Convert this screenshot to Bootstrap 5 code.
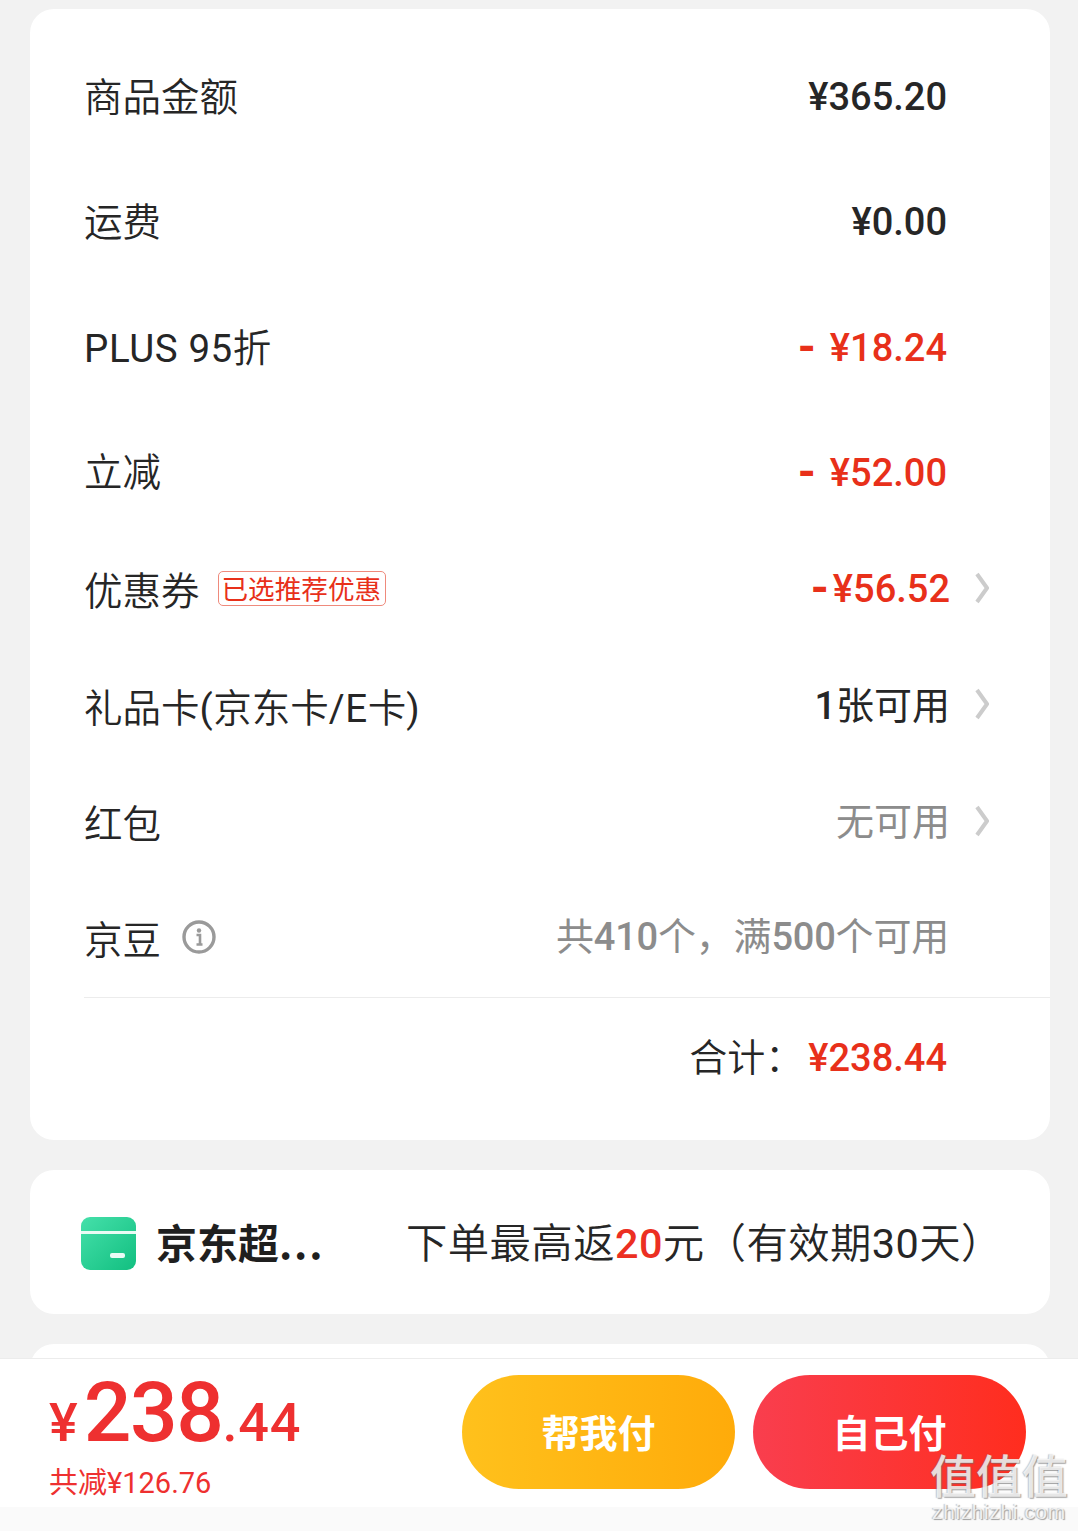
<!DOCTYPE html>
<html lang="zh-CN">
<head>
  <meta charset="UTF-8">
  <meta name="viewport" content="width=device-width, initial-scale=1.0">
  <title>订单结算</title>
  <link href="https://cdn.jsdelivr.net/npm/bootstrap@5.3.0/dist/css/bootstrap.min.css" rel="stylesheet">
  <style>
    body { background: #f2f2f2; font-family: Roboto, "Noto Sans CJK SC", sans-serif; color: #262626; width: 1078px; height: 1531px; overflow: hidden; }
    .page-wrap { height: 1531px; }
    .scroll-area { height: 1358px; padding: 9px 28px 0 30px; overflow: hidden; }
    .panel { background: #fff; border-radius: 24px; }
    .fee-panel { height: 1131px; padding: 63px 0 0 54px; margin-bottom: 30px; }
    .fee-list { gap: 75px; }
    .fee-row { height: 50px; }
    .fee-row .row-name { margin-bottom: 6px; }
    .fee-row .row-plus { margin-bottom: 0; }
    .opt-list { margin-top: 33px; }
    .opt-row { height: 116.33px; }
    .row-name { font-size: 38.5px; font-family: "Noto Sans CJK SC", sans-serif; font-weight: 350; line-height: 50px; white-space: nowrap; }
    .row-name .latin { font-family: Roboto, sans-serif; font-weight: 400; letter-spacing: .6px; }
    .row-gift { margin-top: 5px; }
    .row-val { font-size: 38px; font-weight: 500; text-align: right; line-height: 50px; white-space: nowrap; }
    .fee-row .row-val { margin-right: 103px; }
    .row-val .cjk { font-family: "Noto Sans CJK SC", sans-serif; font-weight: 400; }
    .val-red { color: #e8301a; }
    .val-grey { color: #8c8c8c; }
    .dash { font-size: 46px; line-height: 1; font-weight: 700; position: relative; top: 2px; }
    .dash-gap { margin-right: 14px; }
    .dash-tight { margin-right: 4px; }
    .opt-right { margin-left: auto; margin-right: 61px; gap: 25px; }
    .opt-tail { margin-left: auto; margin-right: 101px; letter-spacing: -.2px; position: relative; top: -2px; }
    .promo-tag { height: 35px; margin-left: 18px; padding: 0 4px 0 3px; border: 1px solid #ef8a7c; border-radius: 5px; color: #e8301a; font-size: 26.6px; font-family: "Noto Sans CJK SC", sans-serif; line-height: 31px; }
    .info-ic { margin-left: 21px; }
    .divider-line { height: 1px; background: #ececec; margin-top: 2px; }
    .total-row { height: 120px; margin-right: 103px; font-size: 38px; }
    .total-label { margin: 0 5px 6px 0; font-size: 38px; }
    .gain-panel { height: 144px; padding: 0 0 0 50px; margin-bottom: 30px; }
    .gain-name { width: 250px; font-size: 41px; font-weight: 700; font-family: "Noto Sans CJK SC", sans-serif; color: #1f1f1f; }
    .gain-name span { letter-spacing: 1.8px; }
    .gain-desc { font-size: 41.4px; font-family: "Noto Sans CJK SC", sans-serif; font-weight: 350; white-space: nowrap; letter-spacing: .4px; }
    .gain-desc b { color: #ec2f22; font-family: Roboto, sans-serif; font-weight: 500; }
    .gain-desc .latin { font-family: Roboto, sans-serif; font-weight: 400; }
    .wallet-ic { margin: 4px 20px 0 0; }
    .stub-panel { height: 60px; border-radius: 24px 24px 0 0; }
    .pay-bar { height: 149px; background: #fff; border-top: 1px solid #ececec; padding: 12px 52px 0 49px; }
    .price-main { color: #ee3030; font-weight: 500; line-height: 1; white-space: nowrap; height: 78px; }
    .cur { font-size: 54px; margin-right: 6px; }
    .big { font-size: 84px; letter-spacing: -1.5px; }
    .cents { font-size: 54px; letter-spacing: .8px; }
    .saved { color: #ee3030; font-size: 29px; line-height: 34px; margin-top: 14px; white-space: nowrap; }
    .saved span { font-family: "Noto Sans CJK SC", sans-serif; }
    .pay-btns { gap: 18px; margin-top: 4px; }
    .btn.pay-btn { width: 273px; height: 114px; border: 0; border-radius: 57px; color: #fff; font-size: 38px; font-weight: 700; font-family: "Noto Sans CJK SC", sans-serif; padding: 0 0 4px; }
    .btn-help { background: linear-gradient(90deg, #ffc11c, #ffab0a); }
    .btn-self { background: linear-gradient(90deg, #f93e4e, #ff2d1e); }
    .foot-strip { height: 24px; background: #fafafa; }
    .wm { position: absolute; right: 8px; bottom: 7px; width: 142px; text-align: center; color: rgba(255,255,255,.78); text-shadow: 1px 1px 1px rgba(110,110,110,.65), -1px 0 1px rgba(110,110,110,.4); pointer-events: none; font-family: "Noto Sans CJK SC", sans-serif; }
    .wm-cn { font-size: 46px; line-height: 50px; margin-bottom: 2px; font-weight: 500; white-space: nowrap; }
    .wm-en { font-family: "Liberation Sans", sans-serif; font-size: 21px; line-height: 24px; letter-spacing: .6px; }
  </style>
</head>
<body>

<div class="page-wrap position-relative d-flex flex-column">
  <div class="scroll-area">

    <!-- Fee summary -->
    <div class="panel fee-panel">
      <div class="fee-list d-flex flex-column">
        <div class="fee-row d-flex align-items-center justify-content-between">
          <div class="row-name">商品金额</div>
          <div class="row-val">¥365.20</div>
        </div>
        <div class="fee-row d-flex align-items-center justify-content-between">
          <div class="row-name">运费</div>
          <div class="row-val">¥0.00</div>
        </div>
        <div class="fee-row d-flex align-items-center justify-content-between">
          <div class="row-name row-plus"><span class="latin">PLUS 95</span>折</div>
          <div class="row-val val-red"><span class="dash dash-gap">-</span>¥18.24</div>
        </div>
        <div class="fee-row d-flex align-items-center justify-content-between">
          <div class="row-name">立减</div>
          <div class="row-val val-red"><span class="dash dash-gap">-</span>¥52.00</div>
        </div>
      </div>

      <div class="opt-list">
        <div class="opt-row d-flex align-items-center">
          <div class="row-name">优惠券</div>
          <div class="promo-tag">已选推荐优惠</div>
          <div class="opt-right d-flex align-items-center">
            <div class="row-val val-red"><span class="dash dash-tight">-</span>¥56.52</div>
            <svg width="14" height="32" viewBox="0 0 14 32"><path d="M2 2 L12 16 L2 30" fill="none" stroke="#cccccc" stroke-width="4"/></svg>
          </div>
        </div>
        <div class="opt-row d-flex align-items-center">
          <div class="row-name row-gift"><span>礼品卡</span><span class="latin">(</span>京东卡<span class="latin">/E</span>卡<span class="latin">)</span></div>
          <div class="opt-right d-flex align-items-center">
            <div class="row-val">1<span class="cjk">张可用</span></div>
            <svg width="14" height="32" viewBox="0 0 14 32"><path d="M2 2 L12 16 L2 30" fill="none" stroke="#cccccc" stroke-width="4"/></svg>
          </div>
        </div>
        <div class="opt-row d-flex align-items-center">
          <div class="row-name">红包</div>
          <div class="opt-right d-flex align-items-center">
            <div class="row-val val-grey"><span class="cjk">无可用</span></div>
            <svg width="14" height="32" viewBox="0 0 14 32"><path d="M2 2 L12 16 L2 30" fill="none" stroke="#cccccc" stroke-width="4"/></svg>
          </div>
        </div>
        <div class="opt-row d-flex align-items-center">
          <div class="row-name">京豆</div>
          <svg class="info-ic" width="34" height="34" viewBox="0 0 34 34">
            <circle cx="17" cy="17" r="15" fill="none" stroke="#9a9a9a" stroke-width="3.4"/>
            <circle cx="17" cy="10.5" r="2.2" fill="#9a9a9a"/>
            <path d="M14.5 15 H18 V24 M14.5 24.5 H20.5" fill="none" stroke="#9a9a9a" stroke-width="2.6"/>
          </svg>
          <div class="row-val val-grey opt-tail"><span class="cjk">共</span>410<span class="cjk">个，满</span>500<span class="cjk">个可用</span></div>
        </div>
      </div>

      <div class="divider-line"></div>
      <div class="total-row d-flex align-items-center justify-content-end">
        <span class="row-name total-label">合计：</span>
        <span class="val-red fw-medium">¥238.44</span>
      </div>
    </div>

    <!-- JD card row -->
    <div class="panel gain-panel d-flex align-items-center">
      <svg class="wallet-ic" width="56" height="54" viewBox="0 0 56 54">
        <defs>
          <linearGradient id="walletFill" x1="0" y1="0" x2="1" y2="1">
            <stop offset="0" stop-color="#45e0aa"/>
            <stop offset="1" stop-color="#12bf80"/>
          </linearGradient>
        </defs>
        <rect x="1" y="0" width="55" height="53" rx="9" fill="url(#walletFill)"/>
        <rect x="1" y="14" width="55" height="3" fill="#e9fbf4"/>
        <rect x="30" y="36" width="15" height="5" rx="2" fill="#eafbf5"/>
      </svg>
      <div class="gain-name">京东超<span>...</span></div>
      <div class="gain-desc">下单最高返<b>20</b>元（有效期<span class="latin">30</span>天）</div>
    </div>

    <div class="panel stub-panel"></div>
  </div>

  <!-- Pay bar -->
  <div class="pay-bar d-flex justify-content-between">
    <div>
      <div class="price-main d-flex align-items-baseline">
        <span class="cur">¥</span><span class="big">238</span><span class="cents">.44</span>
      </div>
      <div class="saved"><span>共减</span>¥126.76</div>
    </div>
    <div class="pay-btns d-flex align-items-start">
      <button class="btn pay-btn btn-help">帮我付</button>
      <button class="btn pay-btn btn-self">自己付</button>
    </div>
  </div>
  <div class="foot-strip"></div>

  <!-- Watermark -->
  <div class="wm">
    <div class="wm-cn">值值值</div>
    <div class="wm-en">zhizhizhi.com</div>
  </div>
</div>

<script src="https://cdn.jsdelivr.net/npm/bootstrap@5.3.0/dist/js/bootstrap.bundle.min.js"></script>
</body>
</html>
